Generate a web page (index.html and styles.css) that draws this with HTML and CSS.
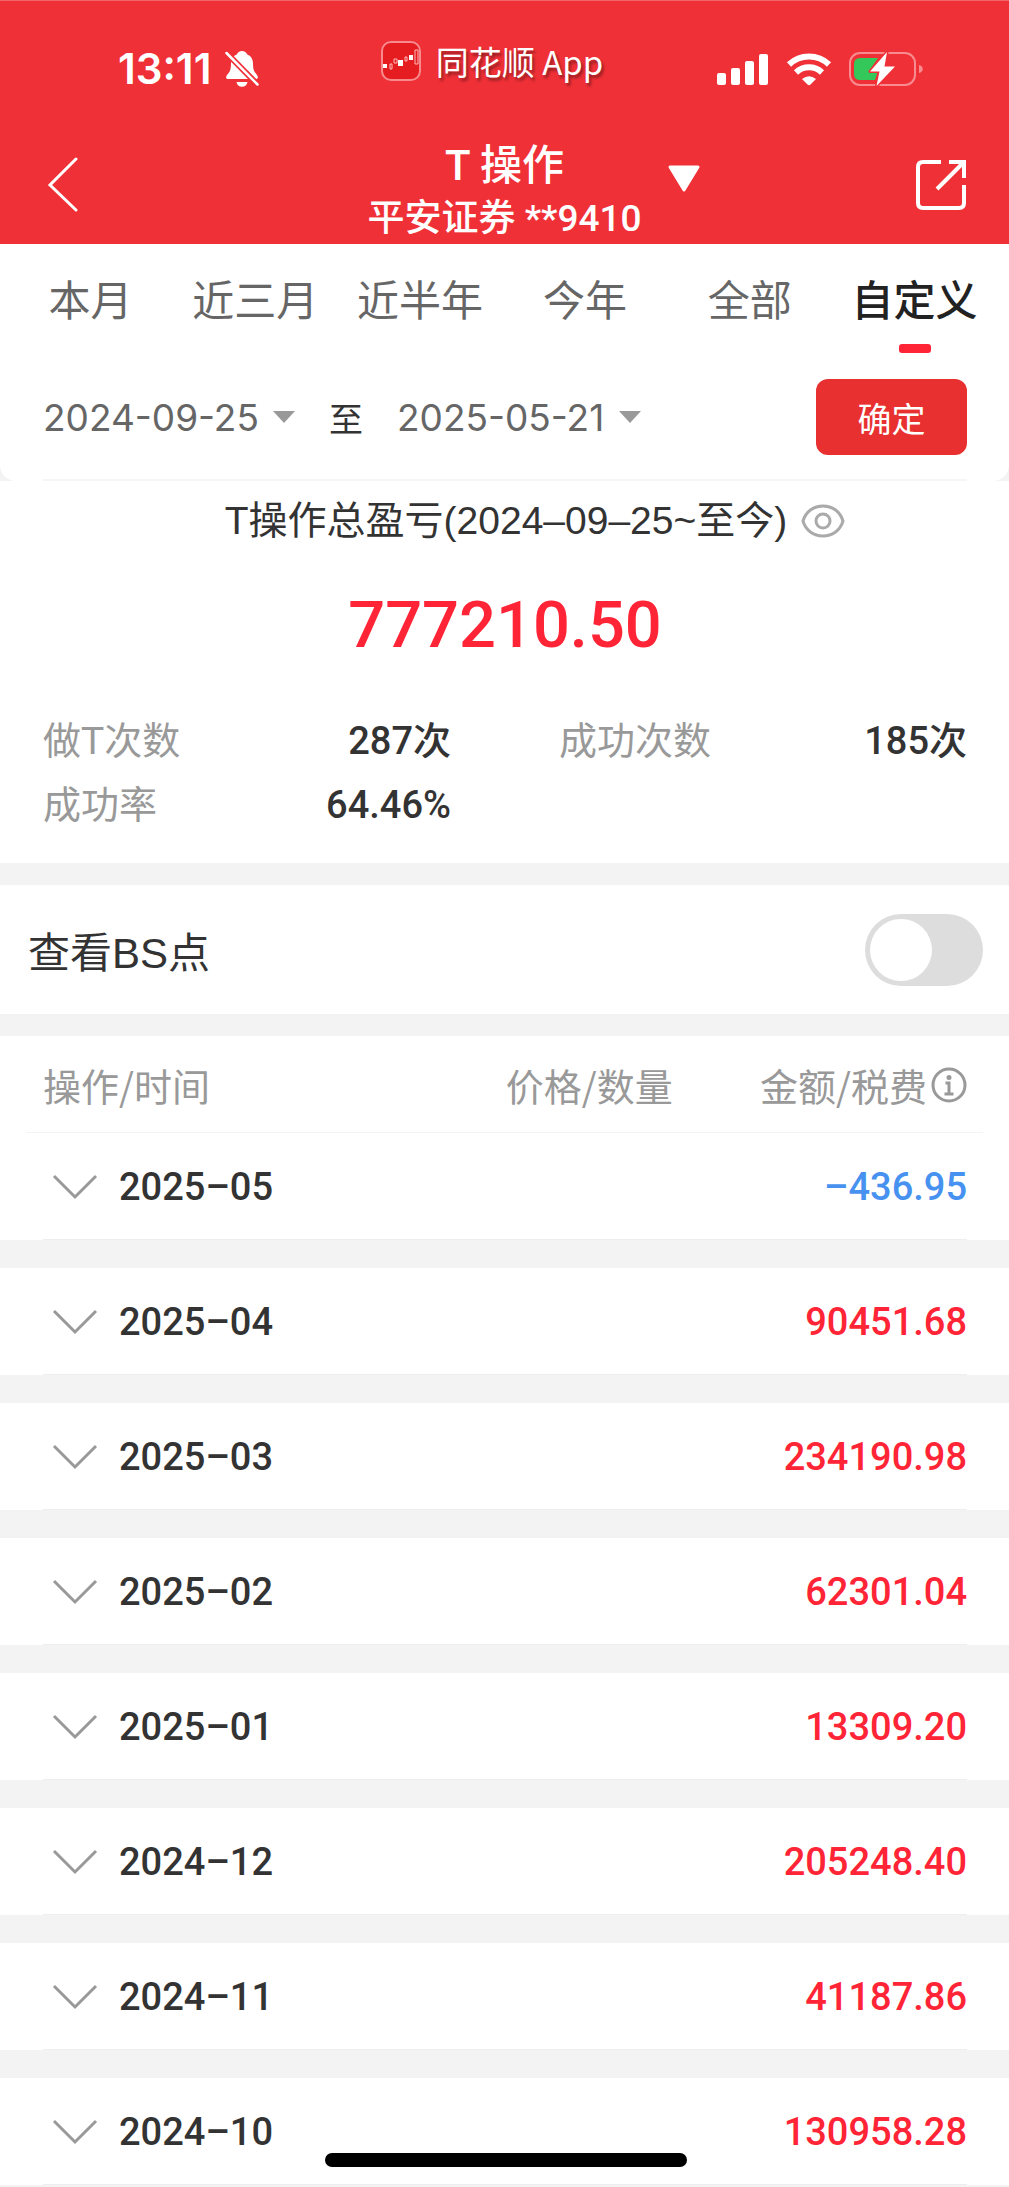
FILE: index.html
```html
<!DOCTYPE html>
<html lang="zh-CN">
<head>
    <meta charset="UTF-8">
    <meta name="viewport" content="width=device-width, initial-scale=1.0">
    <title>T 操作</title>
    <link rel="stylesheet" href="styles.css">
</head>
<body>
    <header class="header">
        <div class="status">
            <div class="status-left">
                <span class="time">13:11</span>
                <svg width="34" height="38" viewBox="0 0 34 38">
                    <path d="M17 1c-2.500 0-4.500 1.300-5 3.200C8 5.800 6 9 6 13.500c0 7-1.500 8.500-4 11.500-1.500 2-1 4 1 4h28c2 0 2.500-2 1-4-2.500-3-4-4.500-4-11.500 0-4.500-2-7.700-6-9.300C21.500 2.300 19.500 1 17 1zM11.500 32h11c-.5 3-2.500 4.800-5.500 4.800S12 35 11.500 32z" fill="#fff"/>
                    <path d="M2.500 4l31 31.500" stroke="#f03037" stroke-width="6"/>
                    <path d="M1.500 3l31 31.500" stroke="#fff" stroke-width="2.500" stroke-linecap="round"/>
                </svg>
            </div>
            <div class="status-app">
                <svg width="40" height="40" viewBox="0 0 40 40">
                    <rect x="1" y="1" width="38" height="38" rx="9" fill="#e51c20" stroke="#f68a8d" stroke-width="2"/>
                    <path d="M2 23h4v4H2zM17 19h5v6h-5zM28 14h4v5h-4z" fill="#fff"/>
                    <path d="M9 23h2v5H9zM13 18h3v4h-3zM24 16h2v4h-2zM34 9h3v14h-3z" fill="none" stroke="#fbb" stroke-width="1"/>
                </svg>
                <span>同花顺 App</span>
            </div>
            <div class="status-right">
                <svg width="52" height="33" viewBox="0 0 52 33" fill="#fff">
                    <rect x="0" y="20" width="9" height="12" rx="2"/>
                    <rect x="14" y="15" width="9" height="17" rx="2"/>
                    <rect x="28" y="8" width="9" height="24" rx="2"/>
                    <rect x="42" y="1" width="9" height="31" rx="2"/>
                </svg>
                <svg width="46" height="33" viewBox="0 0 46 33">
                    <path d="M3 11.500a29 29 0 0 1 40 0" fill="none" stroke="#fff" stroke-width="6"/>
                    <path d="M10 19.500a19 19 0 0 1 26 0" fill="none" stroke="#fff" stroke-width="6"/>
                    <path d="M16 26q7-5.500 14 0l-5.500 5.500q-1.500 1.400-3 0z" fill="#fff"/>
                </svg>
                <svg width="75" height="36" viewBox="0 0 75 36">
                    <rect x="1" y="2" width="65" height="32" rx="10" fill="none" stroke="#f78b8f" stroke-width="2"/>
                    <path d="M70 14c5 1 5 7 0 8z" fill="#f78b8f"/>
                    <path d="M11 7h18L20 20h9l-3 9H11q-6 0-6-6V13q0-6 6-6z" fill="#34c759"/>
                    <path d="M38 1L21 20.500h9.500L27.500 35 46 15.500H35.500z" fill="#fff" stroke="#f03037" stroke-width="3" paint-order="stroke" stroke-linejoin="round"/>
                </svg>
            </div>
        </div>
        <div class="nav">
            <button class="icon-btn back" aria-label="返回">
                <svg width="32" height="56" viewBox="0 0 32 56" fill="none" stroke="#fff" stroke-width="3" stroke-linecap="round"><path d="M29 2L3 28l26 25"/></svg>
            </button>
            <div class="account">
                <h1>T 操作</h1>
                <p>平安证券 **9410</p>
            </div>
            <div class="nav-right">
                <button class="icon-btn" aria-label="切换账户">
                    <svg width="34" height="28" viewBox="0 0 34 28"><path d="M3 2h28L17 25z" fill="#fff" stroke="#fff" stroke-width="3" stroke-linejoin="round"/></svg>
                </button>
                <button class="icon-btn" aria-label="分享">
                    <svg width="52" height="52" viewBox="0 0 52 52" fill="none" stroke="#fff" stroke-width="4"><path d="M26 3H8Q3 3 3 8v36q0 5 5 5h36q5 0 5-5V26M34 3h15v16M22 30L48 4"/></svg>
                </button>
            </div>
        </div>
    </header>

    <section class="filter">
        <nav class="tabs">
            <a href="#">本月</a>
            <a href="#">近三月</a>
            <a href="#">近半年</a>
            <a href="#">今年</a>
            <a href="#">全部</a>
            <a href="#" class="active">自定义</a>
        </nav>
        <div class="dates">
            <label class="date"><select aria-label="开始日期"><option>2024-09-25</option></select></label>
            <span class="to">至</span>
            <label class="date"><select aria-label="结束日期"><option>2025-05-21</option></select></label>
            <button class="confirm">确定</button>
        </div>
    </section>

    <section class="summary">
        <div class="summary-title">
            <h2>T操作总盈亏(2024–09–25~至今)</h2>
            <button class="icon-btn" aria-label="隐藏金额">
                <svg width="44" height="34" viewBox="0 0 44 34" fill="none" stroke="#aaa" stroke-width="3"><path d="M2 17C5 7 13 2 22 2s17 5 20 15c-3 10-11 15-20 15S5 27 2 17z"/><circle cx="22" cy="17" r="7"/></svg>
            </button>
        </div>
        <p class="total">777210.50</p>
        <dl class="stats">
            <div><dt>做T次数</dt><dd>287次</dd></div>
            <div><dt>成功次数</dt><dd>185次</dd></div>
            <div><dt>成功率</dt><dd>64.46%</dd></div>
        </dl>
    </section>

    <section class="bs">
        <label for="bs">查看BS点</label>
        <input type="checkbox" role="switch" id="bs" class="switch">
    </section>

    <table class="records">
        <thead>
            <tr>
                <th>操作/时间</th>
                <th>价格/数量</th>
                <th><span class="fee">金额/税费<svg width="36" height="36" viewBox="0 0 36 36" fill="none" stroke="#999" stroke-width="3"><circle cx="18" cy="18" r="16"/><path d="M14.500 16H18v11M13.500 27h9"/><circle cx="18" cy="10.500" r="2.500" fill="#999" stroke="none"/></svg></span></th>
            </tr>
        </thead>
        <tbody id="months"></tbody>
    </table>

    <div class="home-bar"></div>

    <script>
        const months = [
            ['2025–05', '–436.95'],
            ['2025–04', '90451.68'],
            ['2025–03', '234190.98'],
            ['2025–02', '62301.04'],
            ['2025–01', '13309.20'],
            ['2024–12', '205248.40'],
            ['2024–11', '41187.86'],
            ['2024–10', '130958.28']
        ];

        document.getElementById('months').innerHTML = months.map(([month, amount]) => `
            <tr>
                <td colspan="2">
                    <button class="month">
                        <svg width="46" height="28" viewBox="0 0 46 28" fill="none" stroke="#999" stroke-width="3"><path d="M2 3l21 21L44 3"/></svg>
                        ${month}
                    </button>
                </td>
                <td class="amount ${amount.startsWith('–') ? 'loss' : ''}">${amount}</td>
            </tr>`).join('');
    </script>
</body>
</html>
```
FILE: styles.css
```css
* {
    box-sizing: border-box;
}

body {
    margin: 0;
    min-height: 100vh;
    background-color: #f3f3f3;
    color: #333;
    font-family: "Liberation Sans", "Noto Sans CJK SC", sans-serif;
    font-size: 38px;
}

h1, h2, p, dl, dd {
    margin: 0;
    font-weight: 400;
}

button, select {
    padding: 0;
    border: none;
    background: none;
    color: inherit;
    font: inherit;
}

svg {
    display: block;
    flex: none;
}

/* red header */
.header {
    height: 244px;
    border-top: 1px solid #ee666b;
    background-color: #f03037;
    color: #fff;
}

.status {
    display: grid;
    grid-template-columns: 1fr auto 1fr;
    height: 96px;
    padding-right: 25px;
}

.status-left, .status-app, .status-right {
    display: flex;
    align-items: center;
}

.status-left {
    gap: 14px;
    padding: 40px 0 0 118px;
    height: 96px;
}

.time {
    font-family: Inter, sans-serif;
    font-size: 42px;
    font-weight: 600;
    line-height: 56px;
}

.status-app {
    gap: 15px;
    height: 80px;
    padding-top: 40px;
    font-family: "Noto Sans CJK SC", sans-serif;
    font-size: 33px;
    line-height: 40px;
    text-shadow: 2px 3px 3px rgba(0, 0, 0, 0.4);
}

.status-right {
    justify-content: flex-end;
    gap: 17px;
    height: 96px;
    padding: 40px 60px 0 0;
}

.nav {
    display: grid;
    grid-template-columns: 1fr auto 1fr;
    align-items: start;
    padding-top: 42px;
}

.icon-btn {
    display: block;
    flex: none;
}

.back {
    justify-self: start;
    margin: 18px 0 0 47px;
}

.account {
    font-family: Roboto, "Noto Sans CJK SC", sans-serif;
    text-align: center;
}

.account h1 {
    font-size: 42px;
    font-weight: 500;
    line-height: 54px;
}

.account p {
    font-size: 37px;
    font-weight: 500;
    line-height: 52px;
}

.nav-right {
    display: flex;
    justify-content: space-between;
    align-items: flex-start;
    padding: 20px 42px 0 25px;
}

.nav-right .icon-btn:first-child {
    padding-top: 6px;
}

/* range tabs and dates */
.filter {
    position: relative;
    padding-bottom: 26px;
    border-radius: 0 0 16px 16px;
    background-color: #fff;
}

.filter::after {
    content: "";
    position: absolute;
    left: 43px;
    right: 42px;
    bottom: 0;
    height: 2px;
    background-color: #f6f6f6;
}

.tabs {
    display: grid;
    grid-template-columns: repeat(6, 1fr);
    padding: 28px 12px 0 8px;
}

.tabs a {
    display: flex;
    flex-direction: column;
    align-items: center;
    height: 82px;
    color: #666;
    font-size: 42px;
    line-height: 60px;
    text-decoration: none;
    white-space: nowrap;
}

.tabs .active {
    color: #222;
    font-weight: 500;
}

.tabs .active::after {
    content: "";
    width: 32px;
    height: 9px;
    margin-top: 12px;
    border-radius: 3px;
    background-color: #ff2436;
}

.dates {
    display: flex;
    align-items: center;
    padding: 25px 42px 0 43px;
}

.date {
    display: flex;
    align-items: center;
    gap: 14px;
    color: #666;
    font-family: Inter, sans-serif;
    font-size: 37px;
}

.date select {
    appearance: none;
}

.date::after {
    content: "";
    border: 11px solid transparent;
    border-top: 12px solid #999;
    border-bottom: none;
}

.to {
    margin: 0 34px;
    font-size: 34px;
}

.confirm {
    width: 151px;
    height: 76px;
    margin-left: auto;
    border-radius: 12px;
    background-color: #e83030;
    color: #fff;
    font-size: 34px;
}

/* totals */
.summary {
    padding: 12px 42px 26px 43px;
    background-color: #fff;
}

.summary-title {
    display: flex;
    justify-content: center;
    align-items: center;
    gap: 14px;
    padding-left: 60px;
}

.summary-title h2 {
    font-size: 39px;
    line-height: 56px;
}

.total {
    padding: 30px 0 38px;
    color: #ff2436;
    font-family: Roboto, sans-serif;
    font-size: 65px;
    font-weight: 500;
    line-height: 92px;
    text-align: center;
}

.stats {
    display: grid;
    grid-template-columns: 1fr 1fr;
    column-gap: 108px;
}

.stats div {
    display: flex;
    justify-content: space-between;
    line-height: 64px;
}

.stats dt {
    color: #999;
}

.stats dd {
    font-family: Roboto, "Noto Sans CJK SC", sans-serif;
    font-weight: 500;
}

.bs {
    display: flex;
    justify-content: space-between;
    align-items: center;
    height: 129px;
    margin: 22px 0;
    padding: 0 26px 0 28px;
    background-color: #fff;
    font-size: 42px;
}

.switch {
    appearance: none;
    display: flex;
    align-items: center;
    width: 118px;
    height: 72px;
    margin: 0;
    padding: 5px;
    border-radius: 36px;
    background-color: #ddd;
}

.switch::before {
    content: "";
    width: 62px;
    height: 62px;
    border-radius: 50%;
    background-color: #fff;
}

.switch:checked {
    justify-content: flex-end;
    background-color: #ff2436;
}

/* monthly records */
.records {
    width: 100%;
    table-layout: fixed;
    border-spacing: 0;
    background-color: #fff;
}

.records tr {
    position: relative;
}

/* hairline under each row */
.records th:first-child::after, .records td:first-child::after {
    content: "";
    position: absolute;
    left: 43px;
    right: 42px;
    bottom: 28px;
    height: 1px;
    background-color: #eee;
}

.records th:first-child::after {
    left: 26px;
    right: 26px;
    bottom: 0;
    background-color: #f4f4f4;
}

.records th {
    height: 97px;
    padding: 0;
    color: #999;
    font-family: "Noto Sans CJK SC", sans-serif;
    font-weight: 400;
    text-align: right;
}

.records th:first-child {
    padding-left: 43px;
    text-align: left;
}

.records th:last-child {
    padding-right: 42px;
}

.fee {
    display: flex;
    justify-content: flex-end;
    align-items: center;
    gap: 4px;
}

.records td {
    height: 135px;
    padding: 0;
    border-bottom: 28px solid #f3f3f3;
    font-family: Roboto, sans-serif;
    font-weight: 500;
}

.records tbody tr:last-child td {
    height: 107px;
    border-bottom: none;
}

.records tbody tr:last-child td:first-child::after {
    bottom: 0;
}

.month {
    display: flex;
    align-items: center;
    gap: 21px;
    margin-left: 52px;
}

.records .amount {
    padding-right: 42px;
    color: #ff2436;
    text-align: right;
}

.records .loss {
    color: #4792f0;
}

.home-bar {
    position: fixed;
    left: 50%;
    bottom: 20px;
    width: 362px;
    height: 14px;
    margin-left: -180px;
    border-radius: 7px;
    background-color: #000;
}
```
